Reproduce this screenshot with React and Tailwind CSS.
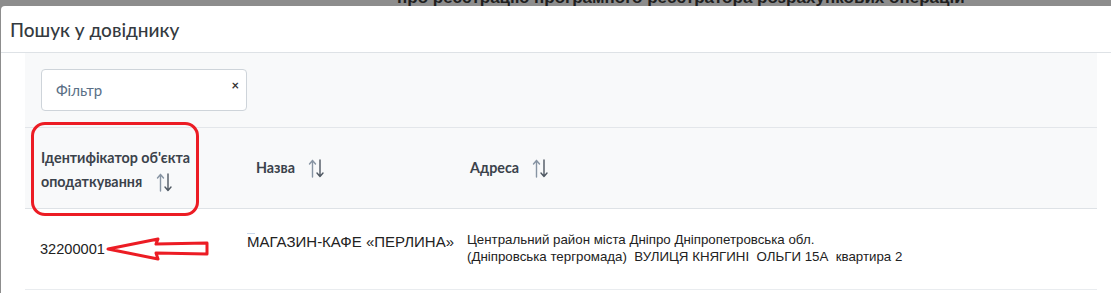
function SortIcon() {
    return (
        <svg width="18" height="21" viewBox="0 0 18 21" className="shrink-0">
            <g fill="none" strokeWidth="1.4" strokeLinecap="round" strokeLinejoin="round">
                <path d="M4.5 19V2.5M1.5 6l3-3.5 3 3.5" stroke="#8794a3" />
                <path d="M12 2v16.5M9 15l3 3.5 3-3.5" stroke="#4f5862" />
            </g>
        </svg>
    );
}

export default function App() {
    return (
        <div className="relative w-[1111px] h-[293px] overflow-hidden bg-[#8d8d8d] flex flex-col">
            <div className="h-[6px] overflow-hidden shrink-0">
                <div className="pl-[397px] -mt-[11px] text-[17px] leading-[17px] font-bold text-[#1f1f1f] whitespace-nowrap" style={{ fontFamily: "'Liberation Sans', Arial, sans-serif" }}>
                    про реєстрацію програмного реєстратора розрахункових операцій
                </div>
            </div>

            <div className="ml-px flex-1 bg-white rounded-tl-[4px] flex flex-col" style={{ fontFamily: "Lato, 'Noto Sans', sans-serif" }}>
                <div className="h-[47px] shrink-0 border-b border-[#dee2e6] flex items-center pl-[9px] pt-[3px]">
                    <h3 className="text-[19px] font-medium text-[#343a40]">Пошук у довіднику</h3>
                </div>

                <div className="pl-[24px] pr-[14px] flex-1">
                    <div className="bg-[#f8f9fa]">
                        <div className="h-[75px] border-b border-[#e3e6ea] pt-[16px] pl-[16px]">
                            <div className="relative w-[206px] h-[42px] bg-white border border-[#ced4da] rounded-[4px] flex items-center pl-[14px]">
                                <span className="text-[15px] text-[#5a6f86]">Фільтр</span>
                                <span className="absolute right-[7px] top-[9px] text-[13px] font-bold text-[#333] leading-none">×</span>
                            </div>
                        </div>

                        <div className="grid grid-cols-[215px_214px_1fr] h-[81px] border-b border-[#dee2e6] text-[14.3px] font-bold text-[#3b424b]">
                            <div className="pl-[16px] pt-[18px] leading-[24px]">
                                <div>Ідентифікатор об'єкта</div>
                                <div className="flex items-center gap-[14px]">
                                    оподаткування <SortIcon />
                                </div>
                            </div>
                            <div className="pl-[16px] flex items-center gap-[13px]">
                                Назва <SortIcon />
                            </div>
                            <div className="pl-[16px] flex items-center gap-[13px]">
                                Адреса <SortIcon />
                            </div>
                        </div>
                    </div>

                    <div className="grid grid-cols-[215px_214px_1fr] h-[81px] bg-white border-b border-[#e9ecef] text-[#222]" style={{ fontFamily: "'Liberation Sans', Arial, sans-serif" }}>
                        <div className="pl-[15px] flex items-center pt-[1px] text-[14.6px]">32200001</div>
                        <div className="pl-[7px] pt-[24px] text-[15px] whitespace-nowrap">
                            <div className="w-[8px] h-px bg-[#c8d6ea]" />
                            <div className="leading-[17px] -mt-px">МАГАЗИН-КАФЕ «ПЕРЛИНА»</div>
                        </div>
                        <div className="pl-[13px] flex flex-col justify-center text-[13.3px] leading-[17px] whitespace-pre pb-[3px]">
                            <div>Центральний район міста Дніпро Дніпропетровська обл.</div>
                            <div>(Дніпровська тергромада)  ВУЛИЦЯ КНЯГИНІ  ОЛЬГИ 15А  квартира 2</div>
                        </div>
                    </div>
                </div>
            </div>

            {/* annotations */}
            <div className="absolute left-[31px] top-[122px] w-[168px] h-[94px] border-[3px] border-[#ec1c24] rounded-[14px]" />
            <svg className="absolute left-[105px] top-[236px]" width="106" height="26" viewBox="0 0 106 26">
                <path d="M3 13 L53 3 L51 8 L102 7 L102 18 L51 17 L53 23 Z" fill="white" stroke="#ec1c24" strokeWidth="3" strokeLinejoin="round" />
            </svg>
        </div>
    );
}
